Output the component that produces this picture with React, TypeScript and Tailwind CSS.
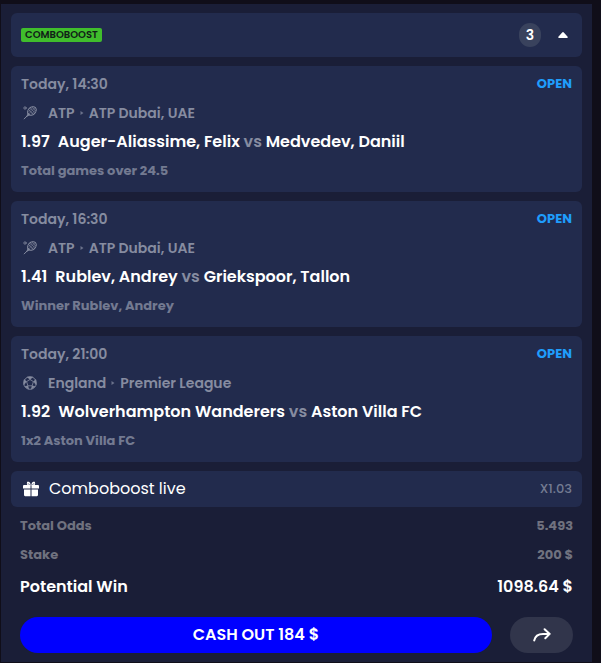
import React from "react";

type Sport = "tennis" | "football";

interface Bet {
  time: string;
  sport: Sport;
  region: string;
  league: string;
  odds: string;
  home: string;
  away: string;
  pick: string;
}

const bets: Bet[] = [
  { time: "Today, 14:30", sport: "tennis", region: "ATP", league: "ATP Dubai, UAE", odds: "1.97", home: "Auger-Aliassime, Felix", away: "Medvedev, Daniil", pick: "Total games over 24.5" },
  { time: "Today, 16:30", sport: "tennis", region: "ATP", league: "ATP Dubai, UAE", odds: "1.41", home: "Rublev, Andrey", away: "Griekspoor, Tallon", pick: "Winner Rublev, Andrey" },
  { time: "Today, 21:00", sport: "football", region: "England", league: "Premier League", odds: "1.92", home: "Wolverhampton Wanderers", away: "Aston Villa FC", pick: "1x2 Aston Villa FC" },
];

function TennisIcon() {
  return (
    <svg viewBox="0 0 14 14" className="h-3.5 w-3.5" fill="none" stroke="currentColor" strokeWidth="1" strokeLinecap="round" aria-hidden="true">
      <circle cx="2" cy="2" r="1.2" strokeWidth="0.8" />
      <ellipse cx="8.9" cy="5" rx="3.7" ry="4.9" transform="rotate(45 8.9 5)" />
      <path d="M5.4 7.2 4 10.1M6.8 8.6 4 10.1M4 10.1 1.2 12.9" />
      <path d="M6.2 4.2 9.8 7.8M7.8 2.6 11.4 6.2M9.4 1.3 12.6 4.5M11.8 1.9 5.8 7.9M9.8 1.6 5.3 6.1M12.6 3.9 8.1 8.4" strokeWidth="0.6" />
    </svg>
  );
}

function FootballIcon() {
  return (
    <svg viewBox="0 0 14 14" className="h-3.5 w-3.5" fill="none" stroke="currentColor" strokeWidth="0.9" strokeLinejoin="round" aria-hidden="true">
      <circle cx="7" cy="7" r="6.3" />
      <path d="M4.200 1.100 7 3.500 9.800 1.100ZM12.800 3.600 10.400 5.600 13.200 8.700ZM12.200 10.600 9.100 9.800 8.300 13.200ZM5.700 13.200 4.900 9.800 1.800 10.600ZM.8 8.700 3.600 5.600 1.200 3.600Z" fill="currentColor" strokeWidth="0.5" />
      <path d="M7 3.500 10.400 5.600 9.100 9.800H4.900L3.600 5.600Z" strokeWidth="0.8" />
    </svg>
  );
}

function GiftIcon() {
  return (
    <svg viewBox="0 0 16 16" className="h-4 w-4" fill="currentColor" aria-hidden="true">
      <path d="M1 4.100h6.500v3.400H0V5.100q0-1 1-1ZM8.500 4.100H15q1 0 1 1v2.400H8.500ZM1 8.500h6.500v6.700H2.100Q1 15.200 1 14.100ZM8.500 8.500H15v5.600q0 1.100-1.100 1.100H8.500Z" />
      <path d="M4.200.8h1.600q1.200.4 1.700 2.200V4.500H4.500Q3.300 2.200 4.200.8ZM11.800.8h-1.600Q9 1.200 8.500 3V4.500h3Q12.700 2.200 11.800.8Z" />
      <path d="M5 2.300 6.600 4M11 2.300 9.400 4" fill="none" stroke="#222b4d" strokeWidth="0.7" />
    </svg>
  );
}

function BetCard({ bet }: { bet: Bet }) {
  return (
    <article className="flex flex-col gap-[9px] rounded-md bg-[#222b4d] px-2.5 pt-2 pb-[11px] text-sm leading-5 font-semibold text-[#868ca0]">
      <div className="flex justify-between">
        <time>{bet.time}</time>
        <span className="text-[13px] leading-5 font-bold text-[#1f9dfc]">OPEN</span>
      </div>
      <div className="flex items-center">
        <span className="mr-[11px] ml-0.5">{bet.sport === "tennis" ? <TennisIcon /> : <FootballIcon />}</span>
        <span>{bet.region}</span>
        <svg viewBox="0 0 4 6" className="mx-[5px] h-1.5 w-1" aria-hidden="true">
          <path d="M.5 1 3.500 3 .5 5Z" fill="#6b728b" />
        </svg>
        <span>{bet.league}</span>
      </div>
      <h2 className="flex text-base leading-5 text-white">
        <span className="mr-2">{bet.odds}</span>
        <span>
          {bet.home} <span className="text-[#868ca0]">vs</span> {bet.away}
        </span>
      </h2>
      <p className="text-[13px] leading-5 font-bold text-[#737a91]">{bet.pick}</p>
    </article>
  );
}

export default function App() {
  return (
    <div className="min-h-screen bg-[#100e19] pt-1 pr-[9px] pb-px pl-px font-['Poppins','Inter','Liberation_Sans',sans-serif]">
      <main className="flex flex-col gap-[9px] bg-[#1a1e37] px-2.5 py-[9px]">
        <header className="flex h-11 items-center justify-between rounded-md bg-[#222b4d] px-2.5">
          <h1 className="rounded-xs bg-[#40bd2c] px-1 text-[10px] leading-[14px] font-semibold text-[#102018]">COMBOBOOST</h1>
          <div className="flex items-center gap-[13px]">
            <span className="flex h-6 w-[22px] items-center justify-center rounded-full bg-[#39425d] text-sm font-semibold text-white">3</span>
            <button type="button" aria-label="Collapse bets" className="flex h-6 w-[18px] items-center justify-center text-white">
              <svg viewBox="0 0 10 6" className="h-1.5 w-2.5" fill="currentColor" aria-hidden="true">
                <path d="M1 6Q-.3 5.500.6 4.600L4.200.5Q5 -.3 5.800.5L9.400 4.600Q10.300 5.500 9 6Z" />
              </svg>
            </button>
          </div>
        </header>

        {bets.map((bet) => (
          <BetCard key={bet.time} bet={bet} />
        ))}

        <section className="flex h-9 items-center rounded-md bg-[#222b4d] px-2.5 text-white">
          <span className="mr-2.5 ml-0.5"><GiftIcon /></span>
          <span className="text-base">Comboboost live</span>
          <span className="ml-auto text-[13px] font-medium text-[#747b92]">X1.03</span>
        </section>

        <dl className="flex flex-col gap-[9px] px-[9px] text-[13px] leading-5 font-bold text-[#70727f]">
          <div className="flex justify-between"><dt>Total Odds</dt><dd>5.493</dd></div>
          <div className="flex justify-between"><dt>Stake</dt><dd>200 $</dd></div>
          <div className="flex justify-between text-base leading-[26px] font-semibold text-white"><dt>Potential Win</dt><dd>1098.64 $</dd></div>
        </dl>

        <div className="flex gap-[18px] px-[9px] pt-2">
          <button type="button" className="h-9 flex-1 rounded-full bg-[#0000ff] text-base font-semibold text-white">CASH OUT 184 $</button>
          <button type="button" aria-label="Share bet" className="flex h-9 w-[63px] items-center justify-center rounded-full bg-[#31354b] text-white">
            <svg viewBox="0 0 18 14" className="h-3.5 w-[18px]" fill="none" stroke="currentColor" strokeWidth="2" strokeLinecap="round" strokeLinejoin="round" aria-hidden="true">
              <path d="M1.200 12.500C2 8.500 5.500 5.900 10 5.900H16.500M11.600 1.200 16.700 5.900 12.300 10.300" />
            </svg>
          </button>
        </div>
      </main>
    </div>
  );
}
